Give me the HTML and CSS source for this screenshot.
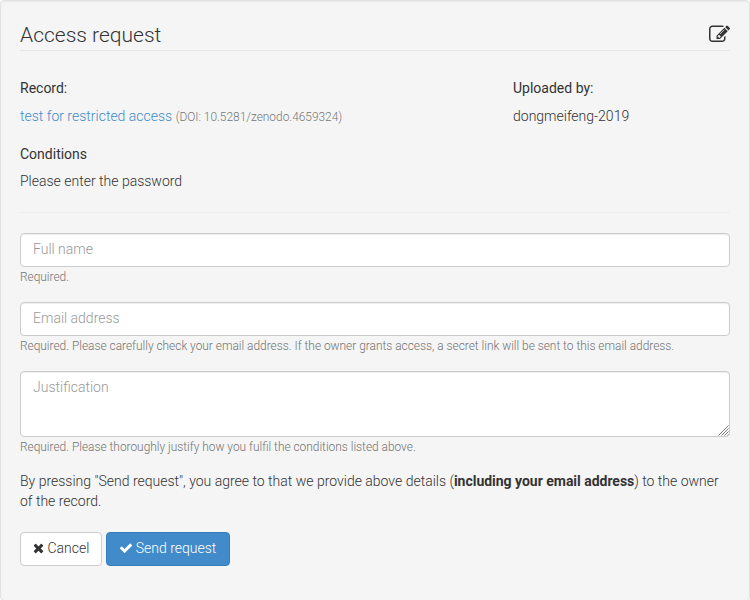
FILE: index.html
```html
<!DOCTYPE html>
<html lang="en">
<head>
<meta charset="utf-8">
<title>Access request</title>
<link rel="stylesheet" href="styles.css">
</head>
<body>
<main class="well">
  <header class="heading">
    <h1>Access request</h1>
    <svg class="edit-icon" viewBox="0 0 1792 1792"><path transform="translate(0,1536) scale(1,-1)" d="M888 352l116 116l-152 152l-116 -116v-56h96v-96h56zM1328 1072q-16 16 -33 -1l-350 -350q-17 -17 -1 -33t33 1l350 350q17 17 1 33zM1408 478v-190q0 -119 -84.500 -203.500t-203.500 -84.500h-832q-119 0 -203.500 84.500t-84.500 203.500v832q0 119 84.500 203.500t203.500 84.500h832q63 0 117 -25q15 -7 18 -23q3 -17 -9 -29l-49 -49q-14 -14 -32 -8q-23 6 -45 6h-832q-66 0 -113 -47t-47 -113v-832q0 -66 47 -113t113 -47h832q66 0 113 47t47 113v126q0 13 9 22l64 64q15 15 35 7t20 -29zM1312 1216l288 -288l-672 -672h-288v288zM1756 1084l-92 -92l-288 288l92 92q28 28 68 28t68 -28l152 -152q28 -28 28 -68t-28 -68z"/></svg>
  </header>
  <section class="details">
    <div>
      <h2>Record:</h2>
      <p><a class="link">test for restricted access</a> <small>(DOI: 10.5281/zenodo.4659324)</small></p>
    </div>
    <div>
      <h2>Uploaded by:</h2>
      <p>dongmeifeng-2019</p>
    </div>
  </section>
  <section class="conditions">
    <h2>Conditions</h2>
    <p>Please enter the password</p>
  </section>
  <hr>
  <form>
    <div class="group"><input class="control" type="text" placeholder="Full name"><span class="help">Required.</span></div>
    <div class="group"><input class="control" type="text" placeholder="Email address"><span class="help">Required. Please carefully check your email address. If the owner grants access, a secret link will be sent to this email address.</span></div>
    <div class="group"><div class="area-wrap"><textarea class="control area" placeholder="Justification"></textarea><svg class="grip" viewBox="0 0 11 11"><path d="M0.500 10.500l10-10M3.500 10.500l7-7M6.500 10.500l4-4M9.500 10.500l1-1"/></svg></div><span class="help">Required. Please thoroughly justify how you fulfil the conditions listed above.</span></div>
    <p class="agree">By pressing "Send request", you agree to that we provide above details (<b>including your email address</b>) to the owner of the record.</p>
    <div class="actions">
      <button type="button" class="btn"><svg class="cross" viewBox="0 0 1408 1792"><path transform="translate(0,1536) scale(1,-1)" d="M1298 214q0 -40 -28 -68l-136 -136q-28 -28 -68 -28t-68 28l-294 294l-294 -294q-28 -28 -68 -28t-68 28l-136 136q-28 28 -28 68t28 68l294 294l-294 294q-28 28 -28 68t28 68l136 136q28 28 68 28t68 -28l294 -294l294 294q28 28 68 28t68 -28l136 -136q28 -28 28 -68t-28 -68l-294 -294l294 -294q28 -28 28 -68z"/></svg> Cancel</button>
      <button type="button" class="btn primary"><svg class="check" viewBox="0 0 1792 1792"><path transform="translate(0,1536) scale(1,-1)" d="M1671 970q0 -40 -28 -68l-724 -724l-136 -136q-28 -28 -68 -28t-68 28l-136 136l-362 362q-28 28 -28 68t28 68l136 136q28 28 68 28t68 -28l294 -295l656 657q28 28 68 28t68 -28l136 -136q28 -28 28 -68z"/></svg> Send request</button>
    </div>
  </form>
</main>
</body>
</html>
```
FILE: styles.css
```css
* { box-sizing: border-box; }
body {
  margin: 0;
  height: 600px;
  overflow: hidden;
  background: #fff;
  color: #333;
  font: 300 14px/20px Roboto, sans-serif;
}
.well {
  height: 601px;
  padding: 19px;
  background: #f5f5f5;
  border: 1px solid #e3e3e3;
  border-radius: 4px;
  box-shadow: inset 0 1px 1px rgba(0, 0, 0, .05);
}
.heading {
  display: flex;
  justify-content: space-between;
  height: 31px;
  margin-bottom: 27px;
  border-bottom: 1px solid #e5e5e5;
}
h1 { margin: 0; font-size: 21px; font-weight: 300; line-height: 30px; }
svg { fill: currentColor; overflow: visible; }
.edit-icon { width: 21px; height: 21px; margin-top: 4px; }
h2 { margin: 0 0 8px; font-size: 14px; font-weight: 400; line-height: 20px; }
p { margin: 0; }
.details { display: grid; grid-template-columns: 493px 1fr; margin-bottom: 17px; }
.link { color: #428bca; }
small { font-size: 11.9px; color: #777; }
.conditions h2 { margin-bottom: 7px; }
hr { margin: 21px 0 20px; border: 0; border-top: 1px solid #eee; }
.group { margin-bottom: 15px; }
.control {
  display: block;
  width: 100%;
  height: 34px;
  padding: 5px 12px 7px;
  border: 1px solid #ccc;
  border-radius: 4px;
  background: #fff;
  box-shadow: inset 0 1px 1px rgba(0, 0, 0, .075);
  color: #555;
  font: inherit;
}
.control::placeholder { color: #999; opacity: 1; }
.area-wrap { position: relative; }
.area { height: 66px; resize: none; }
.grip {
  position: absolute;
  right: 1px;
  bottom: 1px;
  width: 11px;
  height: 11px;
  fill: none;
  stroke: #777;
  stroke-width: 1;
}
.help { display: block; font-size: 11.9px; color: #737373; }
.agree { margin-top: -1px; margin-bottom: 21px; }
b { font-weight: 700; letter-spacing: -.02px; }
.actions { display: flex; gap: 4px; }
.btn {
  height: 34px;
  padding: 5px 12px 7px;
  border: 1px solid #ccc;
  border-radius: 4px;
  background: #fff;
  color: #333;
  font: inherit;
  white-space: nowrap;
}
.primary { padding-right: 13px; background: #428bca; border-color: #357ebd; color: #fff; }
.btn svg { height: 14px; vertical-align: -2px; }
.cross { width: 11px; }
.check { width: 14px; margin-right: -1px; }
```
